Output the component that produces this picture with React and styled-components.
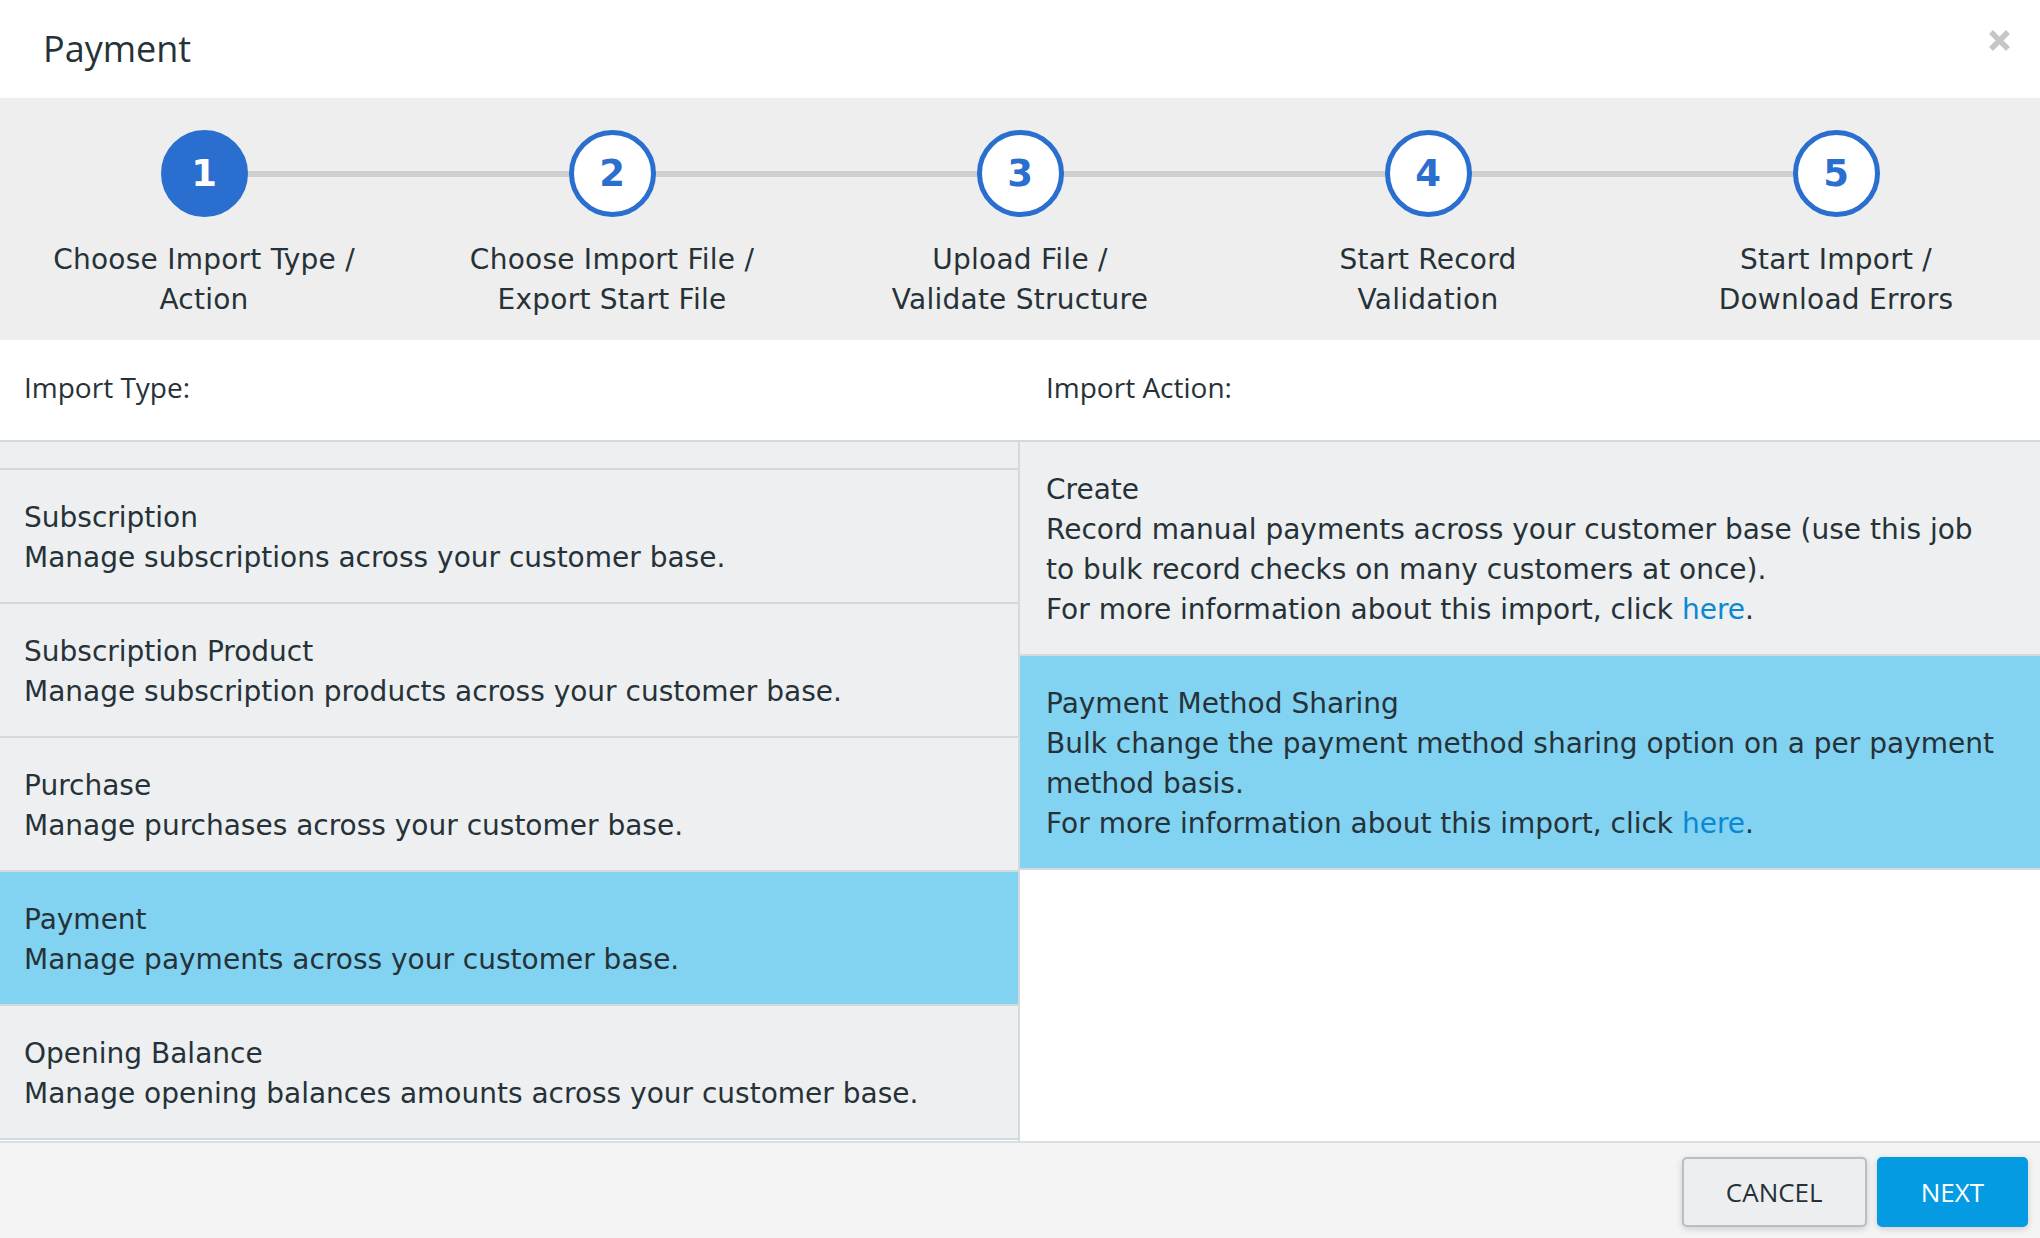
import styled, { createGlobalStyle, css } from 'styled-components'

const steps = [
  ['Choose Import Type /', 'Action'],
  ['Choose Import File /', 'Export Start File'],
  ['Upload File /', 'Validate Structure'],
  ['Start Record', 'Validation'],
  ['Start Import /', 'Download Errors'],
]

const importTypes = [
  { title: 'Subscription', text: 'Manage subscriptions across your customer base.' },
  { title: 'Subscription Product', text: 'Manage subscription products across your customer base.' },
  { title: 'Purchase', text: 'Manage purchases across your customer base.' },
  { title: 'Payment', text: 'Manage payments across your customer base.', selected: true },
  { title: 'Opening Balance', text: 'Manage opening balances amounts across your customer base.' },
]

const importActions = [
  {
    title: 'Create',
    lines: [
      'Record manual payments across your customer base (use this job',
      'to bulk record checks on many customers at once).',
    ],
  },
  {
    title: 'Payment Method Sharing',
    lines: [
      'Bulk change the payment method sharing option on a per payment',
      'method basis.',
    ],
    selected: true,
  },
]

export default function App() {
  return (
    <>
      <GlobalStyle />
      <Modal>
        <Header>
          <Title>Payment</Title>
          <CloseButton aria-label="Close">
            <svg width="21" height="21" viewBox="0 0 21 21">
              <path d="M2 2 L19 19 M19 2 L2 19" stroke="#c6c6c6" strokeWidth="5.5" fill="none" />
            </svg>
          </CloseButton>
        </Header>

        <Stepper>
          {steps.map((label, i) => (
            <Step key={i} $last={i === steps.length - 1}>
              <StepCircle $active={i === 0}>{i + 1}</StepCircle>
              <StepLabel>
                {label[0]}
                <br />
                {label[1]}
              </StepLabel>
            </Step>
          ))}
        </Stepper>

        <Panel>
          <ColumnHead>Import Type:</ColumnHead>
          <ColumnHead $right>Import Action:</ColumnHead>

          <TypeList>
            <ScrollEdge />
            {importTypes.map((item) => (
              <ListItem key={item.title} $selected={item.selected}>
                <div>{item.title}</div>
                <div>{item.text}</div>
              </ListItem>
            ))}
          </TypeList>

          <ActionList>
            {importActions.map((item) => (
              <ListItem key={item.title} $selected={item.selected} $right>
                <div>{item.title}</div>
                {item.lines.map((line) => (
                  <div key={line}>{line}</div>
                ))}
                <div>
                  For more information about this import, click <Link href="#">here</Link>.
                </div>
              </ListItem>
            ))}
          </ActionList>
        </Panel>

        <Footer>
          <Button>CANCEL</Button>
          <Button $primary>NEXT</Button>
        </Footer>
      </Modal>
    </>
  )
}

const GlobalStyle = createGlobalStyle`
  html, body {
    margin: 0;
    padding: 0;
    background: #ffffff;
  }

  body {
    font-family: "DejaVu Sans", Verdana, sans-serif;
    color: #263238;
  }

  * {
    box-sizing: border-box;
  }
`

const Modal = styled.div`
  display: flex;
  flex-direction: column;
  width: 100%;
  height: 100vh;
  background: #ffffff;
  overflow: hidden;
`

const Header = styled.header`
  display: flex;
  align-items: center;
  justify-content: space-between;
  height: 98px;
  flex-shrink: 0;
  padding: 0 30px 2px 43px;
`

const Title = styled.h2`
  margin: 0;
  font-family: "Open Sans", sans-serif;
  font-size: 36px;
  font-weight: 400;
  color: #263238;
`

const CloseButton = styled.button`
  display: flex;
  align-items: center;
  justify-content: center;
  padding: 0;
  margin-top: -15px;
  border: none;
  background: none;
  cursor: pointer;
`

const Stepper = styled.div`
  display: grid;
  grid-template-columns: repeat(5, 1fr);
  height: 242px;
  flex-shrink: 0;
  padding-top: 32px;
  background: #eeeeee;
`

const Step = styled.div`
  position: relative;
  display: flex;
  flex-direction: column;
  align-items: center;

  ${(p) => !p.$last && css`
    &::after {
      content: '';
      position: absolute;
      top: 41px;
      left: 50%;
      width: 100%;
      height: 6px;
      background: #cfcfcf;
      z-index: 0;
    }
  `}
`

const StepCircle = styled.div`
  position: relative;
  z-index: 1;
  display: flex;
  align-items: center;
  justify-content: center;
  width: 87px;
  height: 87px;
  border-radius: 50%;
  border: 5px solid #2a6ed0;
  background: ${(p) => (p.$active ? '#2a6ed0' : '#ffffff')};
  color: ${(p) => (p.$active ? '#ffffff' : '#2a6ed0')};
  font-size: 37px;
  font-weight: 700;
  line-height: 1;
`

const StepLabel = styled.div`
  margin-top: 23px;
  font-size: 28px;
  line-height: 40px;
  letter-spacing: 0.25px;
  text-align: center;
  color: #263238;
`

const Panel = styled.div`
  display: grid;
  grid-template-columns: 1020px 1fr;
  grid-template-rows: 102px 1fr;
  flex: 1;
  min-height: 0;
`

const ColumnHead = styled.div`
  padding: 27px 0 0 ${(p) => (p.$right ? '26px' : '24px')};
  border-bottom: 2px solid #d3dadd;
  font-family: "Open Sans", sans-serif;
  font-size: 28px;
  line-height: 40px;
`

const TypeList = styled.div`
  display: flex;
  flex-direction: column;
  border-right: 2px solid #d3dadd;
  overflow: hidden;
`

const ActionList = styled.div`
  display: flex;
  flex-direction: column;
  overflow: hidden;
`

const ScrollEdge = styled.div`
  height: 28px;
  flex-shrink: 0;
  background: #edeff1;
  border-bottom: 2px solid #d3dadd;
`

const ListItem = styled.div`
  flex-shrink: 0;
  padding: 28px ${(p) => (p.$right ? '26px' : '24px')} 24px;
  border-bottom: 2px solid #d3dadd;
  background: ${(p) => (p.$selected ? '#81d3f1' : '#edeff1')};
  font-size: 28px;
  line-height: 40px;
  color: #263238;
  cursor: pointer;
`

const Link = styled.a`
  color: #0a88d2;
  text-decoration: none;
`

const Footer = styled.footer`
  display: flex;
  align-items: center;
  justify-content: flex-end;
  gap: 10px;
  height: 97px;
  flex-shrink: 0;
  padding: 2px 12px 0 0;
  background: #f4f4f4;
  border-top: 2px solid #dcdfe1;
`

const Button = styled.button`
  height: 70px;
  padding: 0 42px;
  border-radius: 5px;
  font-family: "Open Sans", sans-serif;
  font-size: 26px;
  font-weight: 400;
  cursor: pointer;
  box-shadow: 0 2px 7px rgba(0, 0, 0, 0.16);
  border: 2px solid ${(p) => (p.$primary ? '#049be3' : '#b4bfc6')};
  background: ${(p) => (p.$primary ? '#049be3' : '#edeef0')};
  color: ${(p) => (p.$primary ? '#ffffff' : '#263238')};
`
